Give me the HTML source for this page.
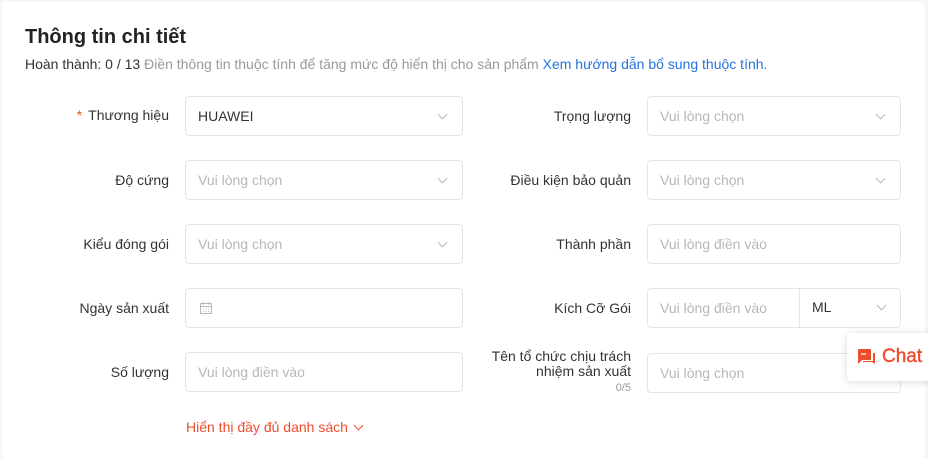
<!DOCTYPE html>
<html><head><meta charset="utf-8"><style>
*{box-sizing:border-box;margin:0;padding:0}
html,body{width:928px;height:458px}
body{background:#f6f6f6;font-family:"Liberation Sans",Arial,sans-serif;position:relative;overflow:hidden;color:#333}
.card{position:absolute;left:2px;top:2px;width:923px;height:456px;background:#fff;border-radius:4px}
h1{position:absolute;left:25px;top:26px;font-size:20px;font-weight:bold;color:#222}
.sub{position:absolute;left:25px;top:56px;font-size:14px;color:#333;white-space:nowrap}
.sub .g{color:#999}.sub a{color:#2673dd;text-decoration:none}
.lab{position:absolute;font-size:14px;color:#333;text-align:right;white-space:nowrap}
.inp{position:absolute;height:40px;border:1px solid #e5e5e5;border-radius:4px;font-size:14px;color:#333;padding-left:12px;line-height:38px;background:#fff}
.ph{color:#b7b7b7}
.chev{position:absolute;right:16px;top:14px;width:7px;height:7px;border-right:1px solid #b7b7b7;border-bottom:1px solid #b7b7b7;transform:rotate(45deg)}
.req{color:#ee4d2d;margin-right:6px}
</style></head><body>
<div class="card"></div>
<h1>Thông tin chi tiết</h1>
<div class="sub">Hoàn thành: 0 / 13 <span class="g">Điền thông tin thuộc tính để tăng mức độ hiển thị cho sản phẩm</span> <a>Xem hướng dẫn bổ sung thuộc tính.</a></div>

<div class="lab" style="right:759px;top:107px"><span class="req">*</span>Thương hiệu</div>
<div class="inp" style="left:185px;top:96px;width:278px">HUAWEI<span class="chev"></span></div>
<div class="lab" style="right:759px;top:172px">Độ cứng</div>
<div class="inp" style="left:185px;top:160px;width:278px"><span class="ph">Vui lòng chọn</span><span class="chev"></span></div>
<div class="lab" style="right:759px;top:236px">Kiểu đóng gói</div>
<div class="inp" style="left:185px;top:224px;width:278px"><span class="ph">Vui lòng chọn</span><span class="chev"></span></div>
<div class="lab" style="right:759px;top:300px">Ngày sản xuất</div>
<div class="inp" style="left:185px;top:288px;width:278px"><svg width="14" height="14" viewBox="0 0 14 14" style="position:absolute;left:13px;top:12px" fill="none" stroke="#b7b7b7" stroke-width="1"><rect x="1.5" y="2.5" width="11" height="10"/><path d="M1.5 5.5h11M4 1v3M10 1v3"/><path d="M4 8h1M6.5 8h1M9 8h1M4 10.5h1M6.5 10.5h1M9 10.5h1"/></svg></div>
<div class="lab" style="right:759px;top:364px">Số lượng</div>
<div class="inp" style="left:185px;top:352px;width:278px"><span class="ph">Vui lòng điền vào</span></div>
<div style="position:absolute;left:186px;top:419px;font-size:14px;color:#ee4d2d">Hiển thị đầy đủ danh sách <span style="display:inline-block;width:7px;height:7px;border-right:1.5px solid #ee4d2d;border-bottom:1.5px solid #ee4d2d;transform:rotate(45deg);margin-left:3px;position:relative;top:-3px"></span></div>

<div class="lab" style="right:297px;top:108px">Trọng lượng</div>
<div class="inp" style="left:647px;top:96px;width:254px"><span class="ph">Vui lòng chọn</span><span class="chev"></span></div>
<div class="lab" style="right:297px;top:172px">Điều kiện bảo quản</div>
<div class="inp" style="left:647px;top:160px;width:254px"><span class="ph">Vui lòng chọn</span><span class="chev"></span></div>
<div class="lab" style="right:297px;top:236px">Thành phần</div>
<div class="inp" style="left:647px;top:224px;width:254px"><span class="ph">Vui lòng điền vào</span></div>
<div class="lab" style="right:297px;top:300px">Kích Cỡ Gói</div>
<div class="inp" style="left:647px;top:288px;width:254px"><span class="ph">Vui lòng điền vào</span><div style="position:absolute;left:151px;top:-1px;width:102px;height:40px;border-left:1px solid #e5e5e5;padding-left:12px">ML<span class="chev"></span></div></div>
<div class="lab" style="right:297px;top:349px;line-height:15px">Tên tổ chức chịu trách<br>nhiệm sản xuất<br><span style="font-size:11px;color:#999;line-height:11px">0/5</span></div>
<div class="inp" style="left:647px;top:353px;width:254px"><span class="ph">Vui lòng chọn</span></div>

<div style="position:absolute;left:847px;top:333px;width:90px;height:48px;background:#fff;border-radius:4px 0 0 4px;box-shadow:0 1px 8px rgba(0,0,0,.15)">
<svg width="18" height="17" viewBox="0 0 18 17" style="position:absolute;left:11px;top:16px"><rect x="0" y="0" width="13" height="11" rx="1" fill="#ee4d2d"/><path d="M0 11v4l4-4z" fill="#ee4d2d"/><path d="M15 4h2v11l-3-2H5v-1h10z" fill="#ee4d2d"/><path d="M3 5h5" stroke="#fff" stroke-width="1.3"/></svg>
<span style="position:absolute;left:35px;top:13px;font-size:19px;color:#ee4d2d;-webkit-text-stroke:0.4px #ee4d2d">Chat</span></div>
</body></html>
